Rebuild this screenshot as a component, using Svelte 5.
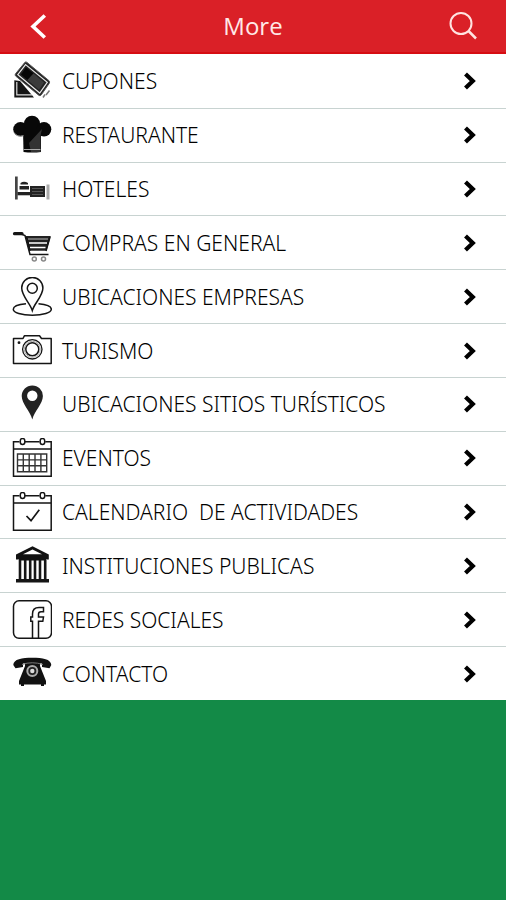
<script>
  const items = [
    { label: 'CUPONES', icon: 'coupon' },
    { label: 'RESTAURANTE', icon: 'chef' },
    { label: 'HOTELES', icon: 'bed' },
    { label: 'COMPRAS EN GENERAL', icon: 'cart' },
    { label: 'UBICACIONES EMPRESAS', icon: 'place' },
    { label: 'TURISMO', icon: 'camera' },
    { label: 'UBICACIONES SITIOS TURÍSTICOS', icon: 'pin' },
    { label: 'EVENTOS', icon: 'calendar' },
    { label: 'CALENDARIO  DE ACTIVIDADES', icon: 'check' },
    { label: 'INSTITUCIONES PUBLICAS', icon: 'bank' },
    { label: 'REDES SOCIALES', icon: 'social' },
    { label: 'CONTACTO', icon: 'phone' }
  ];
</script>

<div class="screen">
  <header>
    <button class="back" aria-label="Back">
      <svg width="30" height="30" viewBox="0 0 30 30"><path d="M16.800 4.500L5 15.500l11.800 11" fill="none" stroke="#fff" stroke-width="3.600" /></svg>
    </button>
    <h1>More</h1>
    <button class="search" aria-label="Search">
      <svg width="30" height="30" viewBox="0 0 30 30" fill="none" stroke="#ffe3e1">
        <circle cx="13" cy="12.5" r="10.5" stroke-width="2" />
        <path d="M20.5 20l7.5 7.5" stroke-width="2.5" />
      </svg>
    </button>
  </header>

  <nav>
    <ul>
      {#each items as item (item.label)}
        <li>
          <a href="#{item.icon}">
            <svg class="icon" viewBox="0 0 40 40" fill="none" stroke="#151515" stroke-width="1.5">
              {#if item.icon === 'coupon'}
                <path d="M2.3 19.3V36.4H22L8 20z" fill="#151515" stroke="none" />
                <path d="M4.8 21V33.900H20" stroke="#ddd" stroke-width="1.200" />
                <path d="M31 36.5l2-3M34 34l3.5-4.5" stroke="#777" />
                <path d="M13 1.2Q14 .5 15 1.4L36.8 19.5Q38.3 21 37.3 22.3L29.2 34Q28 35.4 26.7 34.2L3.6 15Q2.6 14 3.5 12.8z" fill="#222" stroke="#555" stroke-width="1" />
                <path d="M13.6 3.6L35.3 21.3 27.7 32 5.8 13.7z" stroke="#e8e8e8" stroke-width="1.2" />
                <path d="M14 6.500L21.500 12.500 15.500 19 9 13.500z" fill="#050505" stroke="none" />
                <path d="M21.500 12.500L32 21.500 27 28.800 15.500 19z" fill="#3b3b3b" stroke="none" />
              {:else if item.icon === 'chef'}
                <g fill="#080808" stroke="none">
                  <circle cx="8.5" cy="14.3" r="7.3" /><circle cx="20" cy="8.7" r="8" /><circle cx="32" cy="14.3" r="7.3" />
                  <path d="M11 14H29V37Q20 38 11.5 37z" />
                </g>
                <path d="M28.600 20V37H19L17 28 30 14Z" fill="#333" stroke="none" />
                <path d="M2 17.5q3 5 9.500 3.200M11.5 34.5H28.5" stroke="#aaa" stroke-width="1" />
              {:else if item.icon === 'bed'}
                <g stroke="none" fill="#222">
                  <path d="M3 7.500H5.700V30.500H3z" fill="#444" />
                  <path d="M5.500 23H18V26.300H5.500z" />
                  <path d="M8.500 14Q12 11.500 16 14V15.500H8.500zM7.500 17H17V20.500H7.500z" />
                  <path d="M18 17H33V28H18z" />
                  <path d="M34.500 15.500H37.500V30.500H34.500z" fill="#aaa" />
                </g>
                <path d="M20 19.500H31M20 22.500H31M20 25.500H31" stroke="#555" stroke-width="1" />
              {:else if item.icon === 'cart'}
                <path d="M2.500 10.700H10" stroke-width="3.200" stroke-linecap="round" />
                <path d="M9 11L13 12.500 18 31.500H36.500" stroke-width="1.500" />
                <path d="M13.500 13H38.800L34.500 27.800H17z" fill="#222" stroke="none" />
                <path d="M16 16H36" stroke="#888" />
                <path d="M17 20H35M18 24.500H33.500" stroke="#fff" stroke-width="1.500" />
                <path d="M14.500 14L18 28M38 14L34 28" />
                <circle cx="22.300" cy="36" r="2" stroke="#888" /><circle cx="31.500" cy="36" r="2" stroke="#888" />
              {:else if item.icon === 'place'}
                <path d="M14 26.800C6 27.500 1.300 29.500 1.300 32.200 1.300 35.600 9.500 38.300 20.300 38.300S39.300 35.600 39.300 32.200C39.300 29.500 34 27.500 26.500 26.800" />
                <path d="M20.300 33.500C18 26 9.700 19 9.700 11A10.600 10.600 0 0 1 30.900 11C30.900 19 22.500 26 20.300 33.500z" />
                <circle cx="20.300" cy="11.200" r="5" />
              {:else if item.icon === 'camera'}
                <path d="M1.500 7.500H11L12.500 4.700H27.500L29.500 7.500H39.200V32.500H1.500z" stroke-linejoin="round" />
                <circle cx="20.300" cy="18.300" r="9.700" stroke-width="1.300" /><circle cx="20.300" cy="18.300" r="6.500" />
                <circle cx="20.300" cy="18.300" r="8" stroke="#aaa" stroke-width="1" />
                <circle cx="7" cy="11.700" r="1.400" fill="#151515" stroke="none" />
              {:else if item.icon === 'pin'}
                <path d="M20.300 35.500C18 27 9.700 19.500 9.700 12A10.600 10.600 0 0 1 30.900 12C30.900 19.500 22.500 27 20.300 35.500zM20.300 6.500a5.200 5.200 0 1 0 0 10.400a5.200 5.200 0 1 0 0-10.400z" fill="#222" fill-rule="evenodd" stroke="none" />
              {:else if item.icon === 'calendar' || item.icon === 'check'}
                <path d="M7.500 3.700H1.500V38.200H39.200V3.700H33.300M13 3.700H27.500M1.500 11H39.200" />
                <rect x="8.300" y=".5" width="4.500" height="6" rx="2.200" /><rect x="28.200" y=".5" width="4.500" height="6" rx="2.200" />
                {#if item.icon === 'calendar'}
                  <path d="M5.500 16H34.700V33.700H5.500zM5.500 21.900H34.700M5.500 27.800H34.700M11.300 16V33.700M17.200 16V33.700M23 16V33.700M28.900 16V33.700" stroke="#333" stroke-width="1.400" />
                {:else}
                  <path d="M14.500 24L19 28.700 27.300 17.700" stroke-width="1.700" />
                {/if}
              {:else if item.icon === 'bank'}
                <path d="M20.500 .3L36.800 8.500V13.500H34V14.500H7V13.500H4V8.500z" fill="#111" stroke="none" />
                <path d="M11 8.200L20.500 3.600 30 8.200z" fill="#fff" stroke="none" />
                <path d="M8 14V33M13.200 14V33M18.200 14V33M23 14V33M28 14V33M33.200 14V33" stroke-width="2.600" />
                <path d="M4 34.700H37" stroke-width="3.500" />
              {:else if item.icon === 'social'}
                <rect x="1.500" y=".8" width="38" height="37.500" rx="5.500" />
                <path d="M20.500 38V21.300H18.800V17H20.500V14C20.500 9.500 23 7.500 27 7.500H31.500V11.700H29C27 11.700 26.500 12.500 26.500 14V17H31.500L30.800 21.300H26.500V38" />
              {:else}
                <path d="M1.300 11C1.500 5 10 3.700 20.300 3.700S39 5 39.300 11L37.500 14.300 30 13V9.500Q20 7.500 11 9.500V13L3.500 14.300z" fill="#111" stroke="none" />
                <path d="M13 8H28V12L34 27V30.500H32V32H29V30.500H12V32H9V30.500H7V27L13 12z" fill="#111" stroke="none" />
                <path d="M10 10.500Q20 7 31 10.500" stroke="#777" stroke-width="1" />
                <circle cx="20.300" cy="17" r="5" fill="#222" stroke="#aaa" stroke-width="2" />
                <circle cx="20.300" cy="17" r="2.200" fill="#ddd" stroke="none" />
              {/if}
            </svg>
            <span>{item.label}</span>
            <svg class="arrow" viewBox="0 0 14 20"><path d="M2.500 3L9.800 10l-7.300 7" fill="none" stroke="#000" stroke-width="4.200" /></svg>
          </a>
        </li>
      {/each}
    </ul>
  </nav>
</div>

<style>
  :global(body) {
    background: #138a47;
  }
  .screen {
    font-family: 'Noto Sans', 'Open Sans', sans-serif;
  }
  header {
    display: flex;
    align-items: center;
    justify-content: space-between;
    height: 54px;
    box-sizing: border-box;
    padding: 0 28px;
    background: #da2027;
    border-bottom: 2px solid #d60d12;
  }
  h1 {
    margin: 0;
    font-family: 'Open Sans', sans-serif;
    font-size: 24px;
    line-height: 34px;
    font-weight: 400;
    color: #ffe9e7;
  }
  button {
    display: flex;
    width: 30px;
    padding: 0;
    border: 0;
    background: none;
  }
  ul {
    display: grid;
    grid-auto-rows: 1fr;
    min-height: 646px;
    margin: 0;
    padding: 0;
    list-style: none;
    background: #fff;
  }
  li {
    display: flex;
    border-top: 1px solid #c8d3d1;
  }
  li:first-child {
    border-top-color: #fff;
  }
  a {
    display: flex;
    flex: 1;
    align-items: center;
    gap: 10px;
    padding: 0 29px 0 12px;
    color: #000;
    text-decoration: none;
  }
  span {
    flex: 1;
    font-size: 21px;
    line-height: 30px;
    font-weight: 300;
    white-space: pre-wrap;
  }
  .icon {
    width: 40px;
    height: 40px;
  }
  .arrow {
    width: 14px;
    height: 20px;
  }
</style>
